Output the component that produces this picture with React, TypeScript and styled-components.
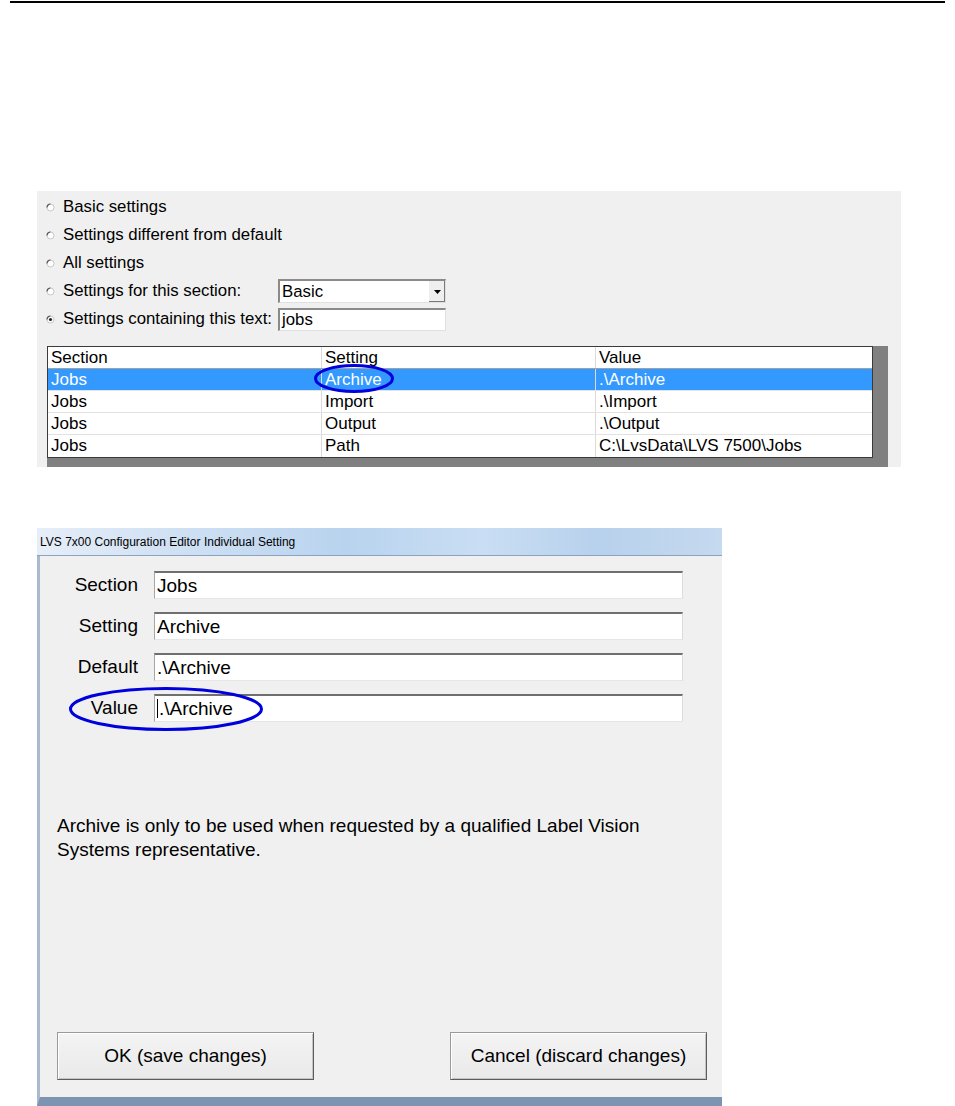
import React from 'react';
import styled, { createGlobalStyle } from 'styled-components';

const GlobalStyle = createGlobalStyle`
  html, body { margin: 0; padding: 0; background: #fff; }
  body { font-family: "Liberation Sans", Arial, sans-serif; color: #000; }
`;

const Page = styled.div`
  position: relative;
  width: 955px;
  height: 1106px;
  overflow: hidden;
`;

const TopRule = styled.div`
  margin: 1px 10px 0;
  height: 2px;
  background: #000;
`;

// settings filter panel
const Panel = styled.div`
  margin: 188px 0 0 37px;
  width: 864px;
  height: 276px;
  padding-top: 2px;
  box-sizing: border-box;
  background: #f0f0f0;
`;

const RadioRow = styled.div`
  display: grid;
  grid-template-columns: 9px 207px 168px;
  column-gap: 8px;
  align-items: center;
  height: 28px;
  padding-left: 9px;
  font-size: 16.8px;
`;

const RadioText = styled.span`
  white-space: nowrap;
`;

const Combo = styled.div`
  display: flex;
  height: 24px;
  box-sizing: border-box;
  background: #fff;
  border-top: 2px solid #8a8a8a;
  border-left: 2px solid #8a8a8a;
  border-right: 1px solid #e0e0e0;
  border-bottom: 1px solid #e0e0e0;
`;

const ComboText = styled.span`
  flex: 1;
  padding-left: 2px;
  line-height: 21px;
`;

const ComboButton = styled.span`
  width: 16px;
  display: flex;
  align-items: center;
  justify-content: center;
  background: #efefef;
  border-left: 1px solid #fff;
  box-shadow: inset -1px -1px #7a7a7a;
`;

const TextBox = styled.div`
  height: 23px;
  box-sizing: border-box;
  background: #fff;
  border-top: 2px solid #8a8a8a;
  border-left: 2px solid #8a8a8a;
  border-right: 1px solid #e0e0e0;
  border-bottom: 1px solid #e0e0e0;
  padding-left: 2px;
  line-height: 20px;
`;

const GridWell = styled.div`
  margin: 13px 0 0 10px;
  width: 841px;
  height: 121px;
  background: #808080;
`;

const Grid = styled.div`
  width: 826px;
  box-sizing: border-box;
  border: 1px solid #3a3a3a;
  background: #fff;
  font-size: 17px;
`;

const GridRow = styled.div<{ $selected?: boolean; $header?: boolean }>`
  display: grid;
  grid-template-columns: 273px 274px 1fr;
  height: 22px;
  box-sizing: border-box;
  border-bottom: 1px solid ${p => (p.$header ? '#a0a0a0' : '#e2e2e2')};
  background: ${p => (p.$selected ? '#3399ff' : '#fff')};
  color: ${p => (p.$selected ? '#fff' : '#000')};
  &:last-child { border-bottom: none; }
`;

const Cell = styled.div<{ $header?: boolean }>`
  padding-left: 3px;
  line-height: 21px;
  white-space: nowrap;
  & + & { border-left: 1px solid ${p => (p.$header ? '#7a7a7a' : '#dadada')}; }
`;

// dialog window
const Window = styled.div`
  margin: 61px 0 0 37px;
  width: 685px;
  height: 578px;
  display: flex;
  flex-direction: column;
`;

const TitleBar = styled.div`
  height: 28px;
  box-sizing: border-box;
  padding-left: 3px;
  display: flex;
  align-items: center;
  font-size: 12px;
  border-bottom: 1px solid #8ba3c0;
  background: linear-gradient(to right, #e6eef8 0%, #d2e2f4 18%, #b9d3ee 45%, #c9def4 65%, #b8d1ec 82%, #c5d9ef 100%);
`;

const Client = styled.div`
  flex: 1;
  display: flex;
  flex-direction: column;
  background: #f0f0f0;
  border-left: 3px solid #a9bace;
  border-bottom: 9px solid #7c93b1;
  padding-top: 15px;
  font-size: 19px;
`;

const FieldList = styled.div`
  display: grid;
  grid-template-columns: 98px 529px;
  column-gap: 16px;
  row-gap: 13px;
  align-items: center;
`;

const FieldLabel = styled.div`
  text-align: right;
`;

const FieldBox = styled.div`
  height: 28px;
  box-sizing: border-box;
  display: flex;
  align-items: center;
  padding-left: 2px;
  background: #fff;
  border-top: 2px solid #6f6f6f;
  border-left: 1px solid #a6a6a6;
  border-right: 1px solid #dcdcdc;
  border-bottom: 1px solid #e6e6e6;
`;

const Caret = styled.span`
  width: 1px;
  height: 19px;
  background: #000;
  margin-right: 1px;
`;

const Description = styled.p`
  margin: 92px 0 0;
  padding: 0 20px 0 17px;
  line-height: 24px;
`;

const ButtonRow = styled.div`
  margin-top: auto;
  display: flex;
  justify-content: space-between;
  padding: 0 15px 17px 17px;
`;

const Button = styled.button`
  width: 257px;
  height: 48px;
  font-family: inherit;
  font-size: 19px;
  color: #000;
  background: linear-gradient(#f4f4f4, #e9e9e9);
  border: 1px solid #9a9a9a;
  border-right-color: #5c5c5c;
  border-bottom-color: #5c5c5c;
  box-shadow: inset 1px 1px #fff, inset -1px -1px #c4c4c4;
`;

const Marker = styled.svg`
  position: absolute;
  overflow: visible;
`;

const Radio = ({ checked }: { checked?: boolean }) => (
  <svg width="9" height="9" viewBox="0 0 9 9">
    <circle cx="4.5" cy="4.5" r="3.5" fill="#fff" stroke="#c8c8c8" strokeWidth="1" />
    <path d="M1 4.5 A3.5 3.5 0 0 1 4.5 1" fill="none" stroke="#555" strokeWidth="1.2" />
    {checked && <circle cx="4.5" cy="4.5" r="1.6" fill="#222" />}
  </svg>
);

const rows = [
  ['Jobs', 'Archive', '.\\Archive'],
  ['Jobs', 'Import', '.\\Import'],
  ['Jobs', 'Output', '.\\Output'],
  ['Jobs', 'Path', 'C:\\LvsData\\LVS 7500\\Jobs'],
];

const fields = [
  ['Section', 'Jobs'],
  ['Setting', 'Archive'],
  ['Default', '.\\Archive'],
  ['Value', '.\\Archive'],
];

export default function App() {
  return (
    <Page>
      <GlobalStyle />
      <TopRule />

      <Panel>
        <RadioRow><Radio /><RadioText>Basic settings</RadioText></RadioRow>
        <RadioRow><Radio /><RadioText>Settings different from default</RadioText></RadioRow>
        <RadioRow><Radio /><RadioText>All settings</RadioText></RadioRow>
        <RadioRow>
          <Radio />
          <RadioText>Settings for this section:</RadioText>
          <Combo>
            <ComboText>Basic</ComboText>
            <ComboButton>
              <svg width="7" height="4" viewBox="0 0 7 4"><path d="M0 0h7L3.5 4z" fill="#000" /></svg>
            </ComboButton>
          </Combo>
        </RadioRow>
        <RadioRow>
          <Radio checked />
          <RadioText>Settings containing this text:</RadioText>
          <TextBox>jobs</TextBox>
        </RadioRow>

        <GridWell>
          <Grid>
            <GridRow $header>
              <Cell $header>Section</Cell>
              <Cell $header>Setting</Cell>
              <Cell $header>Value</Cell>
            </GridRow>
            {rows.map((r, i) => (
              <GridRow key={i} $selected={i === 0}>
                {r.map((c, j) => <Cell key={j}>{c}</Cell>)}
              </GridRow>
            ))}
          </Grid>
        </GridWell>
      </Panel>

      <Window>
        <TitleBar>LVS 7x00 Configuration Editor Individual Setting</TitleBar>
        <Client>
          <FieldList>
            {fields.map(([label, value]) => (
              <React.Fragment key={label}>
                <FieldLabel>{label}</FieldLabel>
                <FieldBox>
                  {label === 'Value' && <Caret />}
                  {value}
                </FieldBox>
              </React.Fragment>
            ))}
          </FieldList>
          <Description>
            Archive is only to be used when requested by a qualified Label Vision
            <br />
            Systems representative.
          </Description>
          <ButtonRow>
            <Button>OK (save changes)</Button>
            <Button>Cancel (discard changes)</Button>
          </ButtonRow>
        </Client>
      </Window>

      <Marker style={{ left: 314, top: 364 }} width="80" height="29">
        <ellipse cx="40" cy="14.5" rx="38.5" ry="13" fill="none" stroke="#0000dd" strokeWidth="3" />
      </Marker>
      <Marker style={{ left: 69, top: 687 }} width="194" height="44">
        <ellipse cx="97" cy="22" rx="95.5" ry="20.5" fill="none" stroke="#0000dd" strokeWidth="3" />
      </Marker>
    </Page>
  );
}
